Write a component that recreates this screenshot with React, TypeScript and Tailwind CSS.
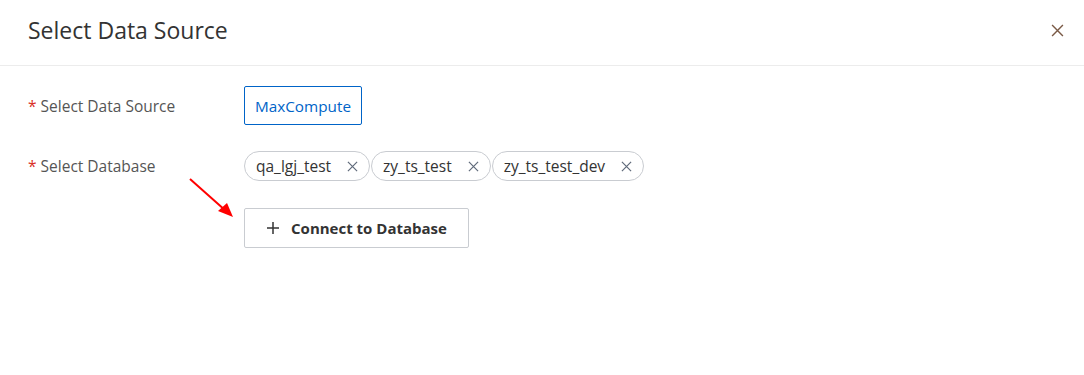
import React from "react";

const font = { fontFamily: '"Open Sans", "Noto Sans", sans-serif' };

function XIcon({ size = 12, className = "" }: { size?: number; className?: string }) {
  return (
    <svg width={size} height={size} viewBox="0 0 12 12" className={className}>
      <path d="M1 1L11 11M11 1L1 11" stroke="currentColor" strokeWidth="1.3" fill="none" />
    </svg>
  );
}

function Tag({ label }: { label: string }) {
  return (
    <div className="flex h-[30px] items-center rounded-full border border-[#c9ccd1] pl-[11px] pr-[11px] pt-[1px] text-[15.5px] text-[#333]">
      <span>{label}</span>
      <XIcon size={11} className="ml-[16px] text-[#5f6a7a]" />
    </div>
  );
}

export default function App() {
  return (
    <div className="relative h-[375px] w-[1084px] bg-white" style={font}>
      <div className="flex h-[66px] items-center justify-between border-b border-[#ececec] pb-[4px] pl-[28px] pr-[20px]">
        <h1 className="text-[23px] text-[#333]">Select Data Source</h1>
        <XIcon size={13} className="text-[#7a5a46]" />
      </div>
      <div className="flex flex-col pl-[28px] pt-[20px]">
        <div className="flex h-[39px] items-center">
          <div className="w-[216px] pt-[2px] text-[15.5px] text-[#555]">
            <span className="text-[#d93026]">*</span> Select Data Source
          </div>
          <div className="flex h-[39px] w-[118px] items-center justify-center rounded-[2px] border border-[#0064c8] pt-[1px] text-[15.3px] text-[#0064c8]">
            MaxCompute
          </div>
        </div>
        <div className="mt-[26px] flex h-[30px] items-center">
          <div className="w-[216px] pt-[2px] text-[15.5px] text-[#555]">
            <span className="text-[#d93026]">*</span> Select Database
          </div>
          <div className="flex gap-[1px]">
            <Tag label="qa_lgj_test" />
            <Tag label="zy_ts_test" />
            <Tag label="zy_ts_test_dev" />
          </div>
        </div>
        <div className="mt-[27px] flex">
          <div className="w-[216px]" />
          <button className="flex h-[40px] w-[225px] items-center justify-center gap-[11px] rounded-[2px] border border-[#c9ccd1] bg-white text-[15px] font-bold text-[#333]">
            <svg width="14" height="14" viewBox="0 0 14 14">
              <path d="M7 1V13M1 7H13" stroke="#333" strokeWidth="1.5" fill="none" />
            </svg>
            Connect to Database
          </button>
        </div>
      </div>
      <svg className="absolute left-0 top-0" width="1084" height="375" style={{ pointerEvents: "none" }}>
        <line x1="190" y1="179" x2="226" y2="211" stroke="#ff0000" strokeWidth="2" />
        <polygon points="233,217 218,211 227,203" fill="#ff0000" />
      </svg>
    </div>
  );
}
